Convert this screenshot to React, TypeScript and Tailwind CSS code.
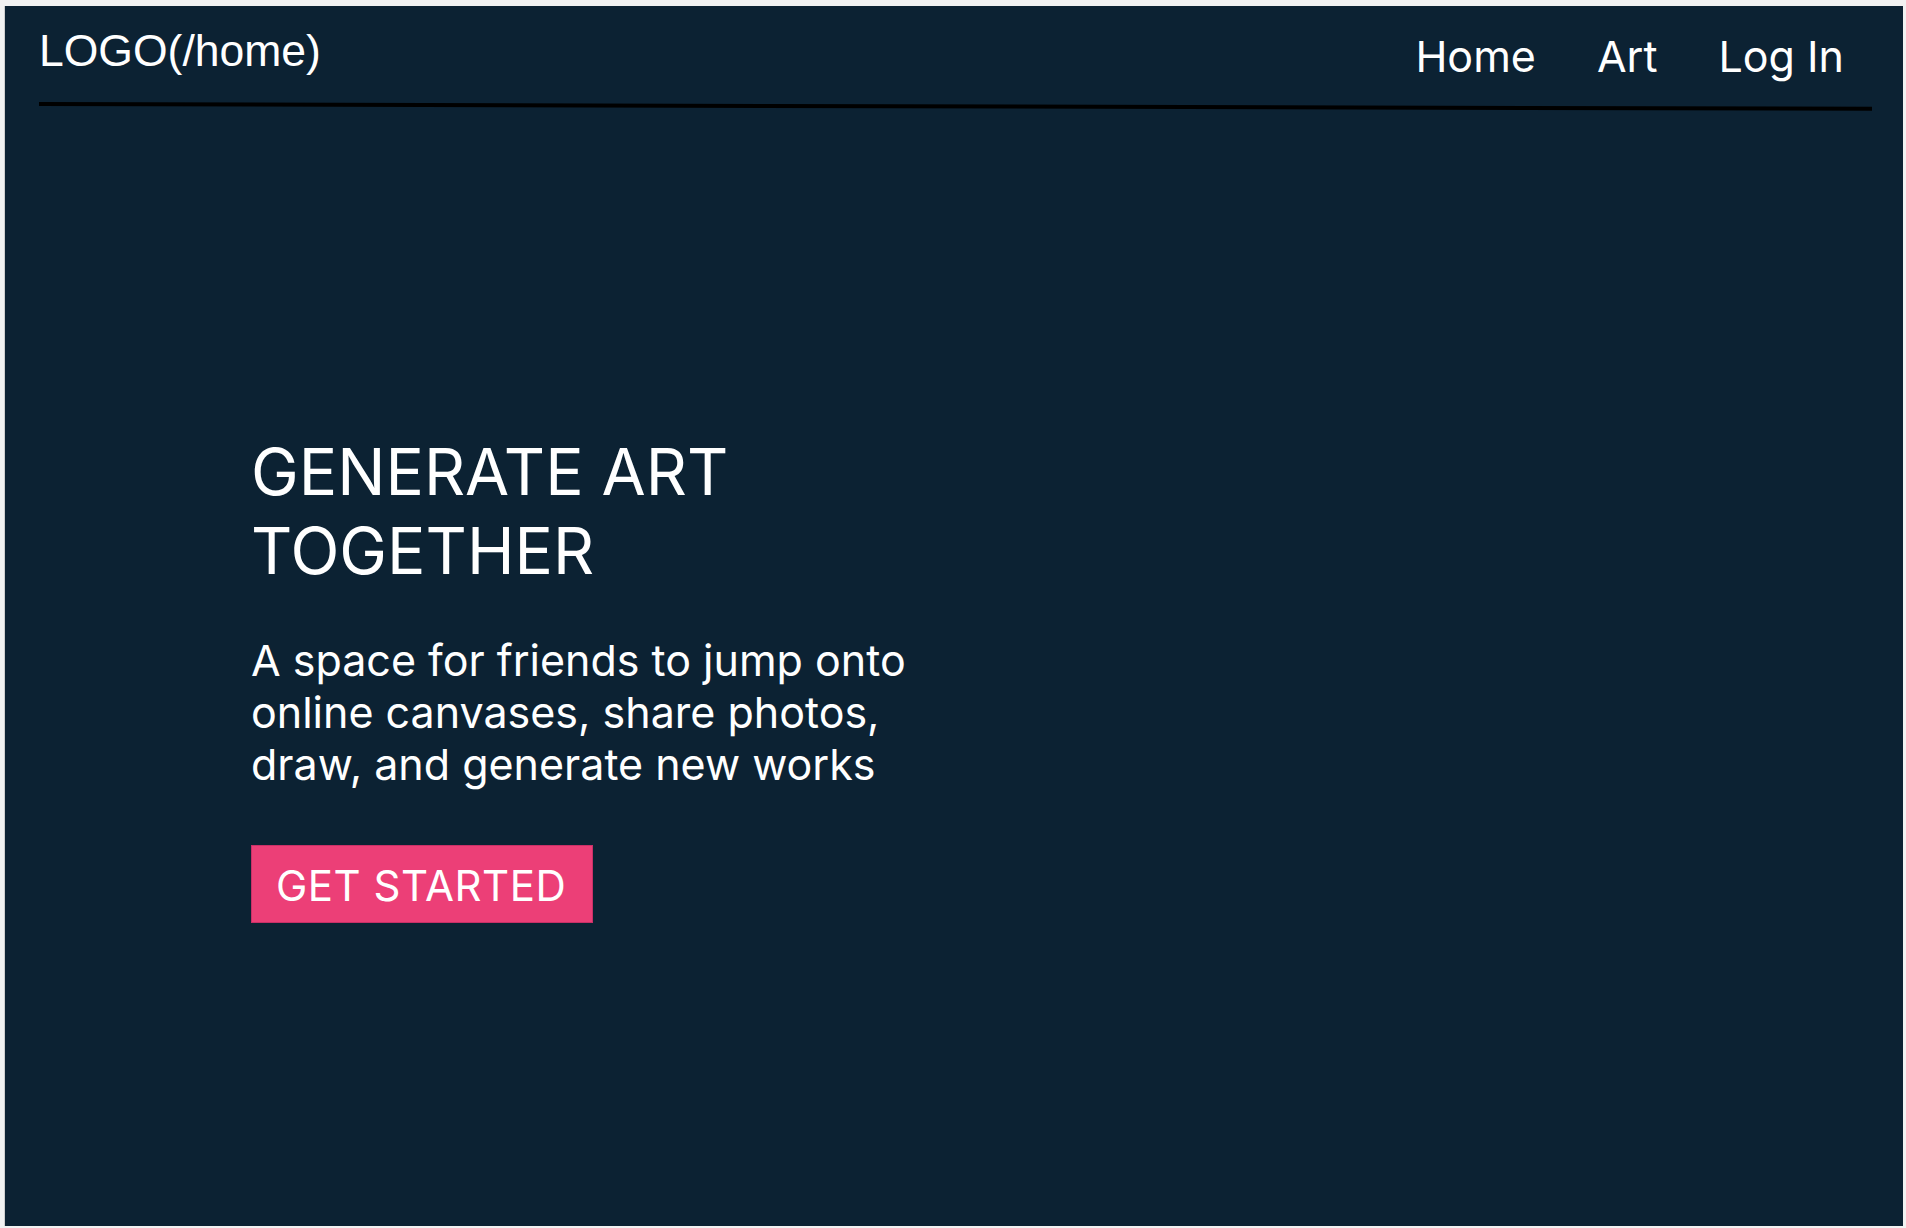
const NAV_LINKS = [
  { label: 'Home', href: '/home' },
  { label: 'Art', href: '/art' },
  { label: 'Log In', href: '/login' },
]

export default function App() {
  return (
    <div className="min-h-screen bg-[#f2f2f2] pt-[6px] pl-[4px] pr-[3px] pb-[2px]">
      <div className="h-[1220px] bg-[#0c2233] border-l border-[#cfcfcf] flex flex-col text-white">
        <header className="pl-[34px] pr-[31px] pt-[23px]">
          <div className="flex justify-between items-start">
            <a href="/home" className="font-['Liberation_Sans',Arial,sans-serif] text-[44.5px] leading-none">
              LOGO(/home)
            </a>
            <nav className="mt-[6px] pr-[28px] flex gap-[61px] font-['Inter',sans-serif] text-[43px] leading-none">
              {NAV_LINKS.map(({ label, href }) => (
                <a key={href} href={href}>{label}</a>
              ))}
            </nav>
          </div>
          <div className="mt-[24px] h-[4px] bg-black origin-left rotate-[0.15deg]" />
        </header>

        <main className="pl-[246px] pt-[326px] font-['Inter',sans-serif] flex flex-col items-start">
          <h1 className="text-[64px] leading-[79px] font-normal">
            GENERATE ART
            <br />
            TOGETHER
          </h1>
          <p className="mt-[44px] text-[43px] leading-[52px]">
            A space for friends to jump onto
            <br />
            online canvases, share photos,
            <br />
            draw, and generate new works
          </p>
          <button className="mt-[55px] w-[342px] h-[78px] pt-[4px] pl-[24px] text-left bg-[#ec3f77] border border-[#c93067] text-[42px] leading-[42px] tracking-[0.012em]">
            GET STARTED
          </button>
        </main>
      </div>
    </div>
  )
}
